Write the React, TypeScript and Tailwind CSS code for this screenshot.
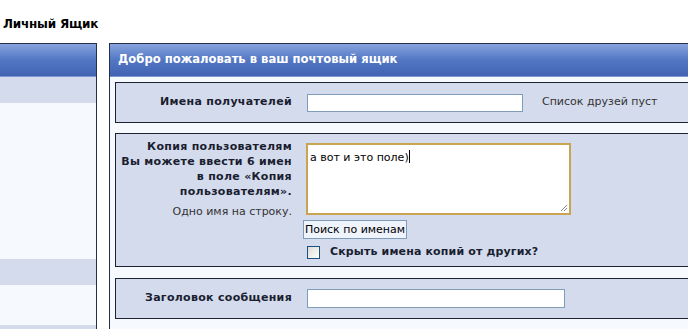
import React from 'react';

// Row with a bold label on the left and controls on the right
const FormRow: React.FC<{ label: React.ReactNode; className?: string; children: React.ReactNode }> = ({
  label,
  className = '',
  children,
}) => (
  <div className={`flex border border-[#1c2233] bg-[#d4dbec] ${className}`}>
    <div className="w-[181px] shrink-0 pr-[5px] text-right">{label}</div>
    <div className="flex-1 pl-[6px]">{children}</div>
  </div>
);

const PanelHeader: React.FC<{ title?: string }> = ({ title }) => (
  <div className="h-[33px] bg-linear-to-b from-[#86a3dd] via-[#5477c4] to-[#4163b2] border-b border-[#7d97cf] pl-[8px] flex items-center">
    {title && <span className="text-[11.6px] font-bold text-white">{title}</span>}
  </div>
);

const App: React.FC = () => {
  return (
    <div
      className="w-[688px] h-[329px] overflow-hidden bg-white text-[11px] text-[#1a1e30]"
      style={{ fontFamily: '"DejaVu Sans", Verdana, sans-serif' }}
    >
      {/* Page title */}
      <div className="pt-[17px] pl-[3px] leading-[14px] text-[12px] font-bold text-black tracking-[-0.2px]">
        Личный Ящик
      </div>

      <div className="mt-[12px] flex gap-[12px]">
        {/* Left menu panel */}
        <div className="w-[97px] shrink-0 border-t border-r border-[#26304a]">
          <PanelHeader />
          <div className="h-[26px] bg-[#d4dbec]" />
          <div className="h-[156px] bg-[#f6faff]" />
          <div className="h-[26px] bg-[#d4dbec]" />
          <div className="h-[40px] bg-[#f6faff]" />
          <div className="h-[26px] bg-[#d4dbec]" />
        </div>

        {/* Main panel */}
        <div className="w-[640px] shrink-0 border-t border-l border-[#26304a]">
          <PanelHeader title="Добро пожаловать в ваш почтовый ящик" />
          <div className="bg-[#f6faff] pl-[5px] pt-[5px] pb-[10px] flex flex-col">
            {/* Recipients */}
            <FormRow
              className="h-[41px] items-center"
              label={<span className="font-bold tracking-[0.3px]">Имена получателей</span>}
            >
              <div className="flex items-center">
                <input
                  type="text"
                  className="ml-[4px] w-[216px] h-[18px] border border-[#7f9db9] bg-white outline-none"
                />
                <span className="ml-[19px] text-[#333]">Список друзей пуст</span>
              </div>
            </FormRow>

            {/* CC */}
            <FormRow
              className="mt-[10px] h-[134px]"
              label={
                <div className="pt-[5px] leading-[15px]">
                  <div className="font-bold tracking-[0.3px]">
                    Копия пользователям
                    <br />
                    Вы можете ввести 6 имен
                    <br />
                    в поле «Копия
                    <br />
                    пользователям».
                  </div>
                  <div className="mt-[5px] text-[#333]">Одно имя на строку.</div>
                </div>
              }
            >
              <div className="pt-[9px] flex flex-col items-start">
                <div className="relative ml-[3px] w-[265px] h-[72px] border-2 border-[#c9a552] bg-white px-[2px] pt-[5px] text-black leading-[14px]">
                  а вот и это поле)
                  <span className="inline-block w-px h-[13px] bg-black align-[-2px]" />
                  <svg className="absolute right-[1px] bottom-[1px]" width="8" height="8" viewBox="0 0 8 8">
                    <path d="M7 1 L1 7 M7 4 L4 7" stroke="#8a8a8a" strokeWidth="1" />
                  </svg>
                </div>
                <button
                  type="button"
                  className="mt-[5px] h-[19px] w-[104px] border border-[#7f9db9] bg-[#eef3fc] text-[11px] text-black leading-none"
                >
                  Поиск по именам
                </button>
                <label className="mt-[5px] ml-[4px] flex items-center gap-[10px]">
                  <span className="w-[13px] h-[13px] border border-[#1c5180] bg-linear-to-br from-[#dcdcd6] to-white" />
                  <span className="font-bold tracking-[0.15px]">Скрыть имена копий от других?</span>
                </label>
              </div>
            </FormRow>

            {/* Subject */}
            <FormRow
              className="mt-[11px] h-[41px] items-center"
              label={<span className="font-bold tracking-[0.3px]">Заголовок сообщения</span>}
            >
              <input
                type="text"
                className="ml-[4px] w-[258px] h-[19px] border border-[#7f9db9] bg-white outline-none"
              />
            </FormRow>
          </div>
        </div>
      </div>
    </div>
  );
};

export default App;
